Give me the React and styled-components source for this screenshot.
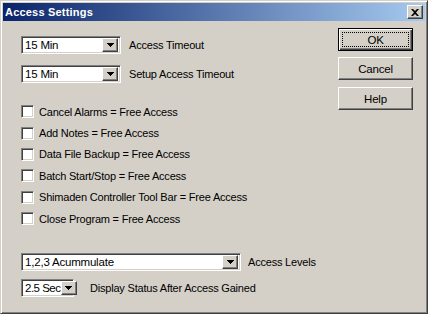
import React from 'react'
import styled, { createGlobalStyle } from 'styled-components'

const Global = createGlobalStyle`
  html, body {
    margin: 0;
    padding: 0;
    background: #D4D0C8;
  }
  * { box-sizing: border-box; }
`

const Window = styled.div`
  width: 428px;
  height: 314px;
  background: #D4D0C8;
  border: 1px solid;
  border-color: #D4D0C8 #404040 #404040 #D4D0C8;
  box-shadow: inset 1px 1px #fff, inset -1px -1px #808080;
  padding: 2px;
  font-family: "Liberation Sans", Arial, sans-serif;
  font-size: 11px;
  letter-spacing: -0.2px;
  color: #000;
  display: flex;
  flex-direction: column;
`

const TitleBar = styled.div`
  height: 18px;
  background: linear-gradient(to right, #0A246A, #A6CAF0);
  display: flex;
  align-items: center;
  justify-content: space-between;
  padding: 0 2px 0 2px;
`

const Title = styled.div`
  color: #fff;
  font-weight: bold;
  font-size: 11px;
  letter-spacing: 0.2px;
`

const Raised = styled.div`
  background: #D4D0C8;
  border: 1px solid;
  border-color: #fff #404040 #404040 #fff;
  box-shadow: inset -1px -1px #808080, inset 1px 1px #D4D0C8;
`

const CloseBtn = styled(Raised)`
  width: 16px;
  height: 14px;
  display: flex;
  align-items: center;
  justify-content: center;
`

const Body = styled.div`
  flex: 1;
  display: flex;
  padding: 15px 0 0 18px;
`

const Left = styled.div`
  flex: 1;
  display: flex;
  flex-direction: column;
`

const Right = styled.div`
  width: 87px;
  display: flex;
  flex-direction: column;
  margin-top: -8px;
`

const Row = styled.div`
  display: flex;
  align-items: center;
  gap: ${p => p.gap || 8}px;
  margin-bottom: ${p => p.mb || 0}px;
`

const ComboBox = styled.div`
  width: ${p => p.w}px;
  height: 18px;
  background: #fff;
  border: 1px solid;
  border-color: #808080 #fff #fff #808080;
  box-shadow: inset 1px 1px #404040, inset -1px -1px #D4D0C8;
  display: flex;
  align-items: center;
  padding: 2px 2px 2px 3px;
`

const ComboText = styled.span`
  flex: 1;
  white-space: nowrap;
  font-size: 11.5px;
  letter-spacing: ${p => p.tight ? -0.5 : -0.2}px;
`

const DropBtn = styled(Raised)`
  width: 16px;
  height: 14px;
  flex: none;
  display: flex;
  align-items: center;
  justify-content: center;
`

const Arrow = () => (
  <svg width="7" height="4" viewBox="0 0 7 4">
    <path d="M0 0h7v1H0zM1 1h5v1H1zM2 2h3v1H2zM3 3h1v1H3z" fill="#000" />
  </svg>
)

const Checks = styled.div`
  display: flex;
  flex-direction: column;
  margin-top: 18px;
`

const CheckRow = styled.div`
  height: 21.4px;
  display: flex;
  align-items: center;
  gap: 5px;
`

const CheckBox = styled.div`
  width: 13px;
  height: 13px;
  background: #fff;
  border: 1px solid;
  border-color: #808080 #fff #fff #808080;
  box-shadow: inset 1px 1px #404040, inset -1px -1px #D4D0C8;
`

const Bottom = styled.div`
  display: flex;
  flex-direction: column;
  margin-top: 24px;
  gap: 8px;
`

const Button = styled.div`
  width: 75px;
  height: 23px;
  display: flex;
  align-items: center;
  justify-content: center;
  font-size: 11.5px;
  background: #D4D0C8;
  border: 1px solid;
  border-color: ${p => p.primary ? '#000' : '#fff #404040 #404040 #fff'};
  box-shadow: ${p => p.primary
    ? 'inset 1px 1px #fff, inset -1px -1px #404040, inset -2px -2px #808080'
    : 'inset -1px -1px #808080, inset 1px 1px #D4D0C8'};
  margin-bottom: ${p => p.mb || 0}px;
  position: relative;
`

const Focus = styled.div`
  position: absolute;
  inset: 3px;
  border: 1px dotted #000;
`

const checks = [
  'Cancel Alarms = Free Access',
  'Add Notes = Free Access',
  'Data File Backup = Free Access',
  'Batch Start/Stop = Free Access',
  'Shimaden Controller Tool Bar = Free Access',
  'Close Program = Free Access',
]

function Combo({ w, value, tight }) {
  return (
    <ComboBox w={w}>
      <ComboText tight={tight}>{value}</ComboText>
      <DropBtn><Arrow /></DropBtn>
    </ComboBox>
  )
}

export default function App() {
  return (
    <>
      <Global />
      <Window>
        <TitleBar>
          <Title>Access Settings</Title>
          <CloseBtn>
            <svg width="8" height="7" viewBox="0 0 8 7">
              <path d="M0 0h2l2 2 2-2h2L5 3.5 8 7H6L4 5 2 7H0l3-3.5z" fill="#000" />
            </svg>
          </CloseBtn>
        </TitleBar>
        <Body>
          <Left>
            <Row mb={11}>
              <Combo w={100} value="15 Min" />
              <span>Access Timeout</span>
            </Row>
            <Row>
              <Combo w={100} value="15 Min" />
              <span>Setup Access Timeout</span>
            </Row>
            <Checks>
              {checks.map(c => (
                <CheckRow key={c}>
                  <CheckBox />
                  <span>{c}</span>
                </CheckRow>
              ))}
            </Checks>
            <Bottom>
              <Row gap={7}>
                <Combo w={220} value="1,2,3 Acummulate" />
                <span>Access Levels</span>
              </Row>
              <Row gap={16}>
                <Combo w={53} value="2.5 Sec" tight />
                <span>Display Status After Access Gained</span>
              </Row>
            </Bottom>
          </Left>
          <Right>
            <Button primary mb={6}><Focus />OK</Button>
            <Button mb={7}>Cancel</Button>
            <Button>Help</Button>
          </Right>
        </Body>
      </Window>
    </>
  )
}
